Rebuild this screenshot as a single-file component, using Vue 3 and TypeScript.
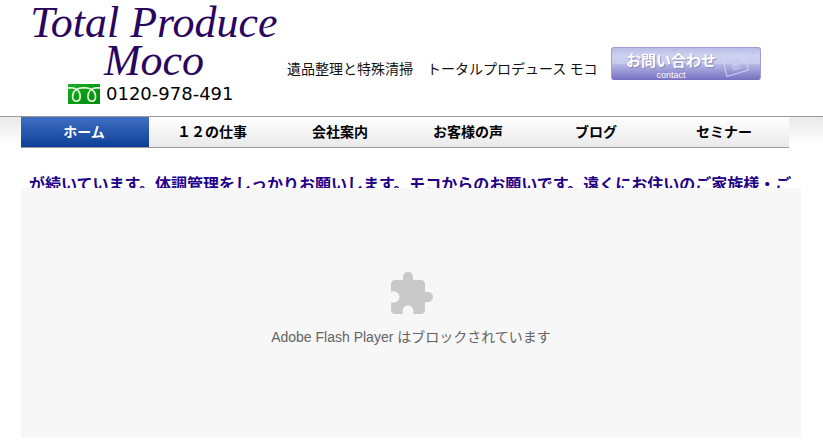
<script setup lang="ts">
import { ref } from 'vue'

interface NavItem {
  label: string
  href: string
}

const items: NavItem[] = [
  { label: 'ホーム', href: '#home' },
  { label: '１２の仕事', href: '#works' },
  { label: '会社案内', href: '#company' },
  { label: 'お客様の声', href: '#voice' },
  { label: 'ブログ', href: '#blog' },
  { label: 'セミナー', href: '#seminar' },
]

const current = ref('#home')
const news =
  'が続いています。体調管理をしっかりお願いします。モコからのお願いです。遠くにお住いのご家族様・ご'
</script>

<template>
  <div class="page">
    <header class="header">
      <div class="brand">
        <h1 class="logo">
          <span>Total Produce</span>
          <span>Moco</span>
        </h1>
        <p class="phone">
          <svg class="dial" viewBox="0 0 32 20" aria-hidden="true">
            <defs>
              <linearGradient id="dial-green" x1="0" y1="0" x2="1" y2="1">
                <stop offset="0" stop-color="#16ad22" />
                <stop offset="1" stop-color="#008c0c" />
              </linearGradient>
            </defs>
            <rect width="32" height="20" fill="url(#dial-green)" />
            <path
              d="M0 3.800H4C9 3.800 12.200 8 12.200 12.300C12.200 15.400 10.700 17.200 8.400 17.200C6.100 17.200 4.600 15.400 4.600 12.500C4.600 7.300 9 3.800 14 3.800H18C23 3.800 27.500 7.300 27.500 12.500C27.500 15.400 26 17.200 23.700 17.200C21.400 17.200 19.900 15.400 19.900 12.300C19.900 8 23 3.800 28 3.800H32"
              fill="none"
              stroke="#dff5d5"
              stroke-width="1.7"
            />
          </svg>
          <span>0120-978-491</span>
        </p>
      </div>
      <p class="tagline">遺品整理と特殊清掃　トータルプロデュース モコ</p>
      <a class="contact" href="#contact">
        <span class="contact-text">
          <span class="contact-ja">お問い合わせ</span>
          <span class="contact-en">contact</span>
        </span>
        <svg class="letter" viewBox="0 0 28 24" aria-hidden="true">
          <g fill="none" stroke="#d3d5f5" stroke-width="1">
            <path d="M1 7.500L22.500 1L26.500 17L5 23.500Z" />
            <path d="M9 13L15 11.200M10 15.500L18 11.500M11.500 17L19 14.500" />
          </g>
          <path d="M18 4.500L21.500 3.500L22.500 7L19 8Z" fill="#d3d5f5" />
        </svg>
      </a>
    </header>

    <div class="band">
      <nav class="nav">
        <a
          v-for="item in items"
          :key="item.href"
          :href="item.href"
          :class="{ active: item.href === current }"
          @click="current = item.href"
          >{{ item.label }}</a
        >
      </nav>
    </div>

    <main class="main">
      <p class="news">{{ news }}</p>
      <section class="plugin">
        <svg class="puzzle" viewBox="0 0 24 24" aria-hidden="true">
          <path
            fill="#c9c9c9"
            d="M20.5 11H19V7c0-1.1-.9-2-2-2h-4V3.5C13 2.12 11.88 1 10.5 1S8 2.12 8 3.5V5H4c-1.1 0-1.99.9-1.99 2v3.8H3.5c1.49 0 2.7 1.21 2.7 2.7s-1.21 2.7-2.7 2.7H2V20c0 1.1.9 2 2 2h3.8v-1.5c0-1.49 1.21-2.7 2.7-2.7s2.7 1.21 2.7 2.7V22H17c1.1 0 2-.9 2-2v-4h1.5c1.38 0 2.5-1.12 2.5-2.5S21.88 11 20.5 11z"
          />
        </svg>
        <p>Adobe Flash Player はブロックされています</p>
      </section>
    </main>
  </div>
</template>

<style>
body {
  background: #fff;
}
</style>

<style scoped>
.page {
  font-family: 'Liberation Sans', 'Noto Sans CJK JP', sans-serif;
  font-size: 14px;
  line-height: 20px;
  color: #111;
}

h1,
p {
  margin: 0;
}

.header {
  display: flex;
  align-items: flex-start;
  padding: 0 21px;
  height: 116px;
}

.brand {
  flex: none;
  width: 266px;
}

.logo {
  display: flex;
  flex-direction: column;
  align-items: center;
  padding-top: 4px;
  font: italic 400 44px/38px 'Liberation Serif', serif;
  color: #2a0560;
  white-space: nowrap;
}

.phone {
  display: flex;
  align-items: center;
  gap: 6px;
  padding: 2px 0 0 47px;
  font: 18px/24px 'DejaVu Sans', sans-serif;
  color: #000;
}

.dial {
  width: 32px;
  height: 20px;
}

.tagline {
  flex: none;
  width: 324px;
  padding-top: 58px;
  font-family: 'Noto Sans CJK JP', sans-serif;
  white-space: nowrap;
}

.contact {
  display: flex;
  align-items: center;
  gap: 6px;
  box-sizing: border-box;
  width: 150px;
  height: 33px;
  margin-top: 47px;
  padding: 2px 8px 0 14px;
  border: 1px solid #9d9fd4;
  border-bottom-color: #7772bd;
  border-radius: 3px;
  background: linear-gradient(#b9bde5, #cdd1f0 25%, #c6caec 50%, #b3b6e1 54%, #7a73c5);
  color: #fff;
  text-decoration: none;
}

.contact-text {
  flex: none;
  display: flex;
  flex-direction: column;
  align-items: center;
  text-shadow: 1px 1px 1px #8486bb;
}

.contact-ja {
  font: 700 15px/20px 'Noto Sans CJK JP', sans-serif;
}

.contact-en {
  font-size: 9px;
  line-height: 10px;
}

.letter {
  flex: none;
  width: 28px;
  height: 24px;
}

.band {
  padding: 0 34px 0 21px;
  border-top: 1px solid #999;
  background: linear-gradient(#e9e9e9, #fff 28px);
}

.nav {
  display: grid;
  grid-template-columns: repeat(6, 1fr);
  border-bottom: 1px solid #999;
  background: linear-gradient(#fff, #e9e9e9);
}

.nav a {
  padding: 4px 2px 6px 0;
  font: 700 14px/20px 'Noto Sans CJK JP', sans-serif;
  color: #000;
  text-align: center;
  text-decoration: none;
}

.nav a.active {
  background: linear-gradient(#416fc2, #0b4097);
  color: #fff;
}

.main {
  padding: 24px 22px 10px 21px;
}

.news {
  height: 16px;
  margin: 0 8px;
  overflow: hidden;
  font: 700 16px/22px 'Noto Sans CJK JP', sans-serif;
  color: #220088;
  white-space: nowrap;
}

.plugin {
  display: flex;
  flex-direction: column;
  align-items: center;
  gap: 9px;
  padding: 82px 0 91px;
  background: #f7f7f7;
  color: #646464;
}

.plugin p {
  font: 14px/20px 'Liberation Sans', 'Noto Sans CJK JP', sans-serif;
}

.puzzle {
  width: 48px;
  height: 48px;
}
</style>
